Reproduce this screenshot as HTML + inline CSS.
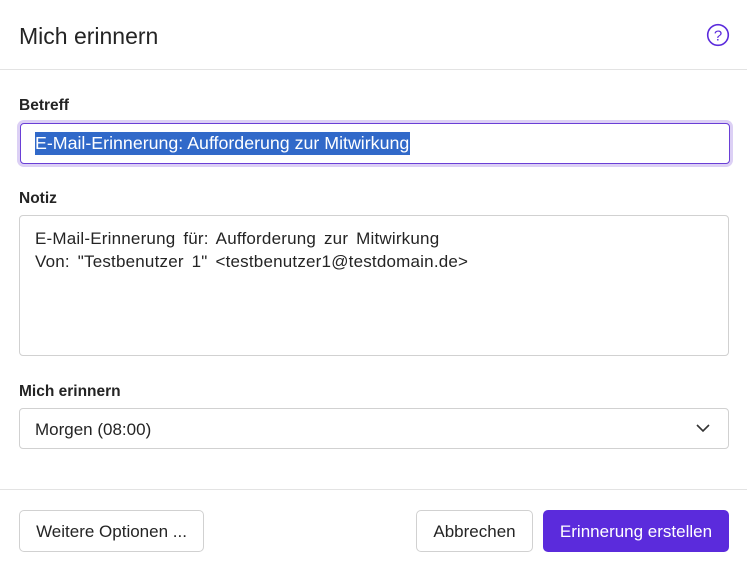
<!DOCTYPE html>
<html><head><meta charset="utf-8"><style>
body{margin:0;width:747px;height:570px;background:#fff;font-family:"Liberation Sans",sans-serif;color:#242424;position:relative;overflow:hidden}
.a{position:absolute}
.lbl{font-weight:bold;font-size:15.5px;left:19px}
.box{border:1px solid #d1d1d1;border-radius:4px;box-sizing:border-box}
.btn{border:1px solid #d1d1d1;border-radius:5px;box-sizing:border-box;font-size:17px;display:flex;align-items:center;justify-content:center;height:42px;top:510px;padding-top:2px}
</style></head><body>
<div class="a" style="left:19px;top:23px;font-size:23px">Mich erinnern</div>
<svg class="a" style="left:706px;top:23px" width="24" height="24" viewBox="0 0 24 24"><circle cx="12" cy="12" r="10.3" fill="none" stroke="#5b2bdc" stroke-width="1.6"/><text x="12" y="17.5" font-size="15" text-anchor="middle" fill="#5b2bdc" font-family="Liberation Sans">?</text></svg>
<div class="a" style="left:0;top:69px;width:747px;height:1px;background:#e3e3e3"></div>
<div class="a lbl" style="top:97px">Betreff</div>
<div class="a" style="left:17px;top:120px;width:716px;height:47px;border-radius:7px;background:#dcd0f5"></div>
<div class="a" style="left:20px;top:123px;width:710px;height:41px;border:1.5px solid #6a3fd6;border-radius:4px;box-sizing:border-box;background:#fff"></div>
<div class="a" style="left:35px;top:132px;height:23px;background:#3169c9;color:#fff;font-size:17.8px;line-height:23px;padding-right:1px">E-Mail-Erinnerung: Aufforderung zur Mitwirkung</div>
<div class="a lbl" style="top:190px">Notiz</div>
<div class="a box" style="left:19px;top:215px;width:710px;height:141px"></div>
<div class="a" style="left:35px;top:227px;font-size:17px;line-height:23px;word-spacing:3px;letter-spacing:0.2px">E-Mail-Erinnerung für: Aufforderung zur Mitwirkung<br>Von: "Testbenutzer 1" &lt;testbenutzer1@testdomain.de&gt;</div>
<div class="a lbl" style="top:383px">Mich erinnern</div>
<div class="a box" style="left:19px;top:408px;width:710px;height:41px"></div>
<div class="a" style="left:35px;top:420px;font-size:17px">Morgen (08:00)</div>
<svg class="a" style="left:695px;top:422px" width="16" height="12" viewBox="0 0 16 12"><path d="M2 3 L8 9 L14 3" fill="none" stroke="#333" stroke-width="1.6"/></svg>
<div class="a" style="left:0;top:489px;width:747px;height:1px;background:#e3e3e3"></div>
<div class="a btn" style="left:19px;width:185px">Weitere Optionen ...</div>
<div class="a btn" style="left:416px;width:117px">Abbrechen</div>
<div class="a btn" style="left:543px;width:186px;background:#5b2bdc;border-color:#5b2bdc;color:#fff">Erinnerung erstellen</div>
</body></html>
